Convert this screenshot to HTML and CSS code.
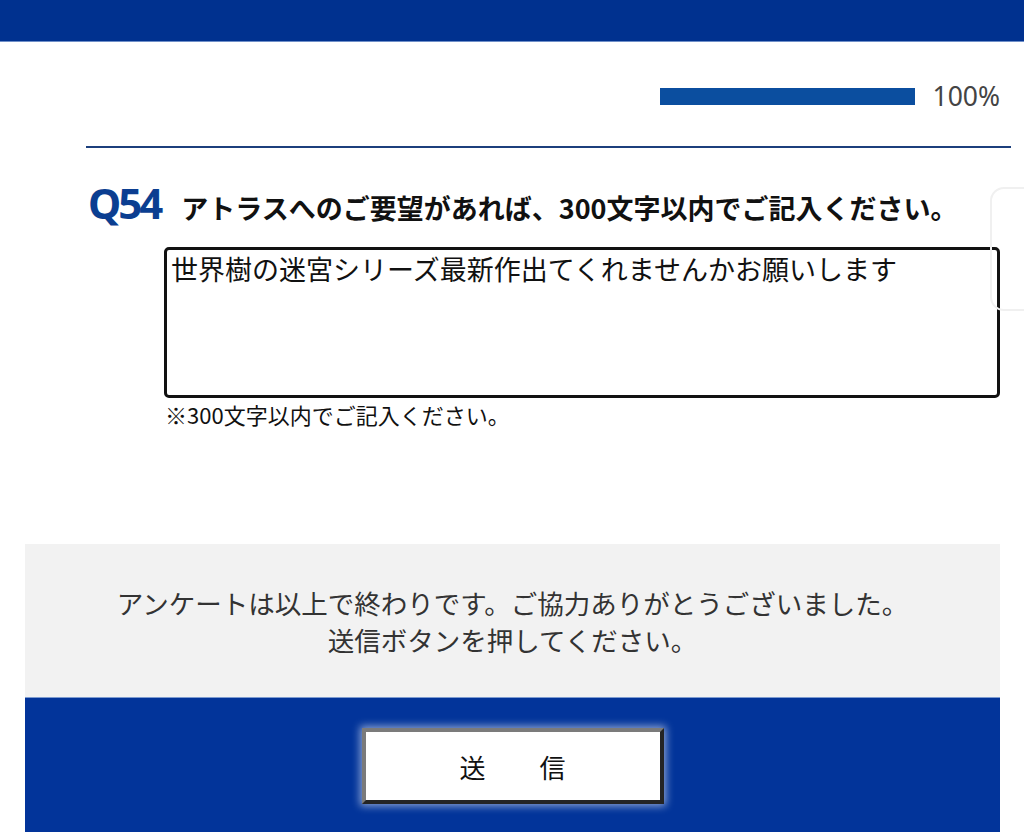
FILE: index.html
```html
<!DOCTYPE html>
<html lang="ja">
<head>
<meta charset="utf-8">
<title>アンケート</title>
<link rel="stylesheet" href="styles.css">
</head>
<body>
<header class="topbar"></header>
<main class="page">
  <div class="progress">
    <div class="progress-track"><div class="progress-fill" style="width:100%"></div></div>
    <span class="progress-label">100%</span>
  </div>
  <hr class="rule">
  <section class="question">
    <div class="q-head">
      <span class="q-num">Q54</span>
      <span class="q-text">アトラスへのご要望があれば、300文字以内でご記入ください。</span>
    </div>
    <textarea class="answer" readonly>世界樹の迷宮シリーズ最新作出てくれませんかお願いします</textarea>
    <p class="note">※300文字以内でご記入ください。</p>
    <div class="side-ghost"></div>
  </section>
  <section class="finish">
    <p class="finish-text">アンケートは以上で終わりです。ご協力ありがとうございました。<br>送信ボタンを押してください。</p>
  </section>
  <section class="submit-area">
    <button class="submit" type="button">送　信</button>
  </section>
</main>
</body>
</html>
```
FILE: styles.css
```css
html, body {
  margin: 0;
  padding: 0;
  background: #ffffff;
  font-family: "Noto Sans CJK JP", "Noto Sans", sans-serif;
  color: #111;
  overflow: hidden;
}

.topbar {
  height: 42px;
  background: #00318f;
  border-bottom: 1px solid #6f8fc8;
  box-sizing: border-box;
}

.page {
  position: relative;
}

.progress {
  display: flex;
  justify-content: flex-end;
  align-items: center;
  gap: 18px;
  height: 36px;
  margin-top: 36px;
  padding-right: 24px;
}

.progress-track {
  width: 255px;
  height: 17px;
  background: #e6e6e6;
}

.progress-fill {
  height: 100%;
  background: #0b4e9f;
}

.progress-label {
  font-family: "Noto Sans", sans-serif;
  font-size: 26.5px;
  line-height: 36px;
  color: #444;
}

.rule {
  margin: 32px 0 0 86px;
  width: 925px;
  height: 2px;
  border: 0;
  background: #1c3f7c;
}

.question {
  position: relative;
}

.q-head {
  display: flex;
  align-items: baseline;
  gap: 21px;
  margin-top: 31px;
  padding-left: 88px;
}

.q-num {
  font-family: "Noto Sans", sans-serif;
  font-weight: 700;
  font-size: 42px;
  line-height: 48px;
  letter-spacing: -3px;
  color: #0b3e91;
}

.q-text {
  font-weight: 700;
  font-size: 27px;
  line-height: 48px;
  color: #111;
}

.answer {
  display: block;
  box-sizing: border-box;
  margin: 15px 0 0 164px;
  width: 836px;
  height: 151px;
  padding: 3px 4px;
  border: 3px solid #111;
  border-radius: 5px;
  font-family: "Noto Sans CJK JP", sans-serif;
  font-size: 27px;
  line-height: 32px;
  color: #111;
  resize: none;
  outline: none;
  overflow: hidden;
}

.note {
  margin: 2px 0 0 165px;
  font-size: 22px;
  line-height: 28px;
  color: #111;
}

.side-ghost {
  position: absolute;
  left: 990px;
  top: 8px;
  width: 60px;
  height: 120px;
  border: 2px solid #f0f0f0;
  border-radius: 14px;
}

.finish {
  margin: 116px 24px 0 25px;
  height: 153px;
  background: #f2f2f2;
  display: flex;
  align-items: center;
  justify-content: center;
}

.finish-text {
  margin: 0;
  text-align: center;
  font-size: 26.5px;
  line-height: 37px;
  color: #333;
}

.submit-area {
  margin: 0 24px 0 25px;
  height: 140px;
  background: #02349a;
  border-top: 1px solid #7d9bd0;
  box-sizing: border-box;
  display: flex;
  justify-content: center;
  align-items: flex-start;
  padding-top: 30px;
}

.submit {
  width: 302px;
  height: 76px;
  box-sizing: border-box;
  background: #ffffff;
  border-style: solid;
  border-width: 4px;
  border-color: #7b7b7b #242424 #242424 #7b7b7b;
  box-shadow: 0 0 8px 2px rgba(255, 255, 255, 0.55);
  font-family: "Noto Sans CJK JP", sans-serif;
  font-size: 26px;
  letter-spacing: 14px;
  padding: 0 0 0 14px;
  color: #111;
  cursor: pointer;
}
```
